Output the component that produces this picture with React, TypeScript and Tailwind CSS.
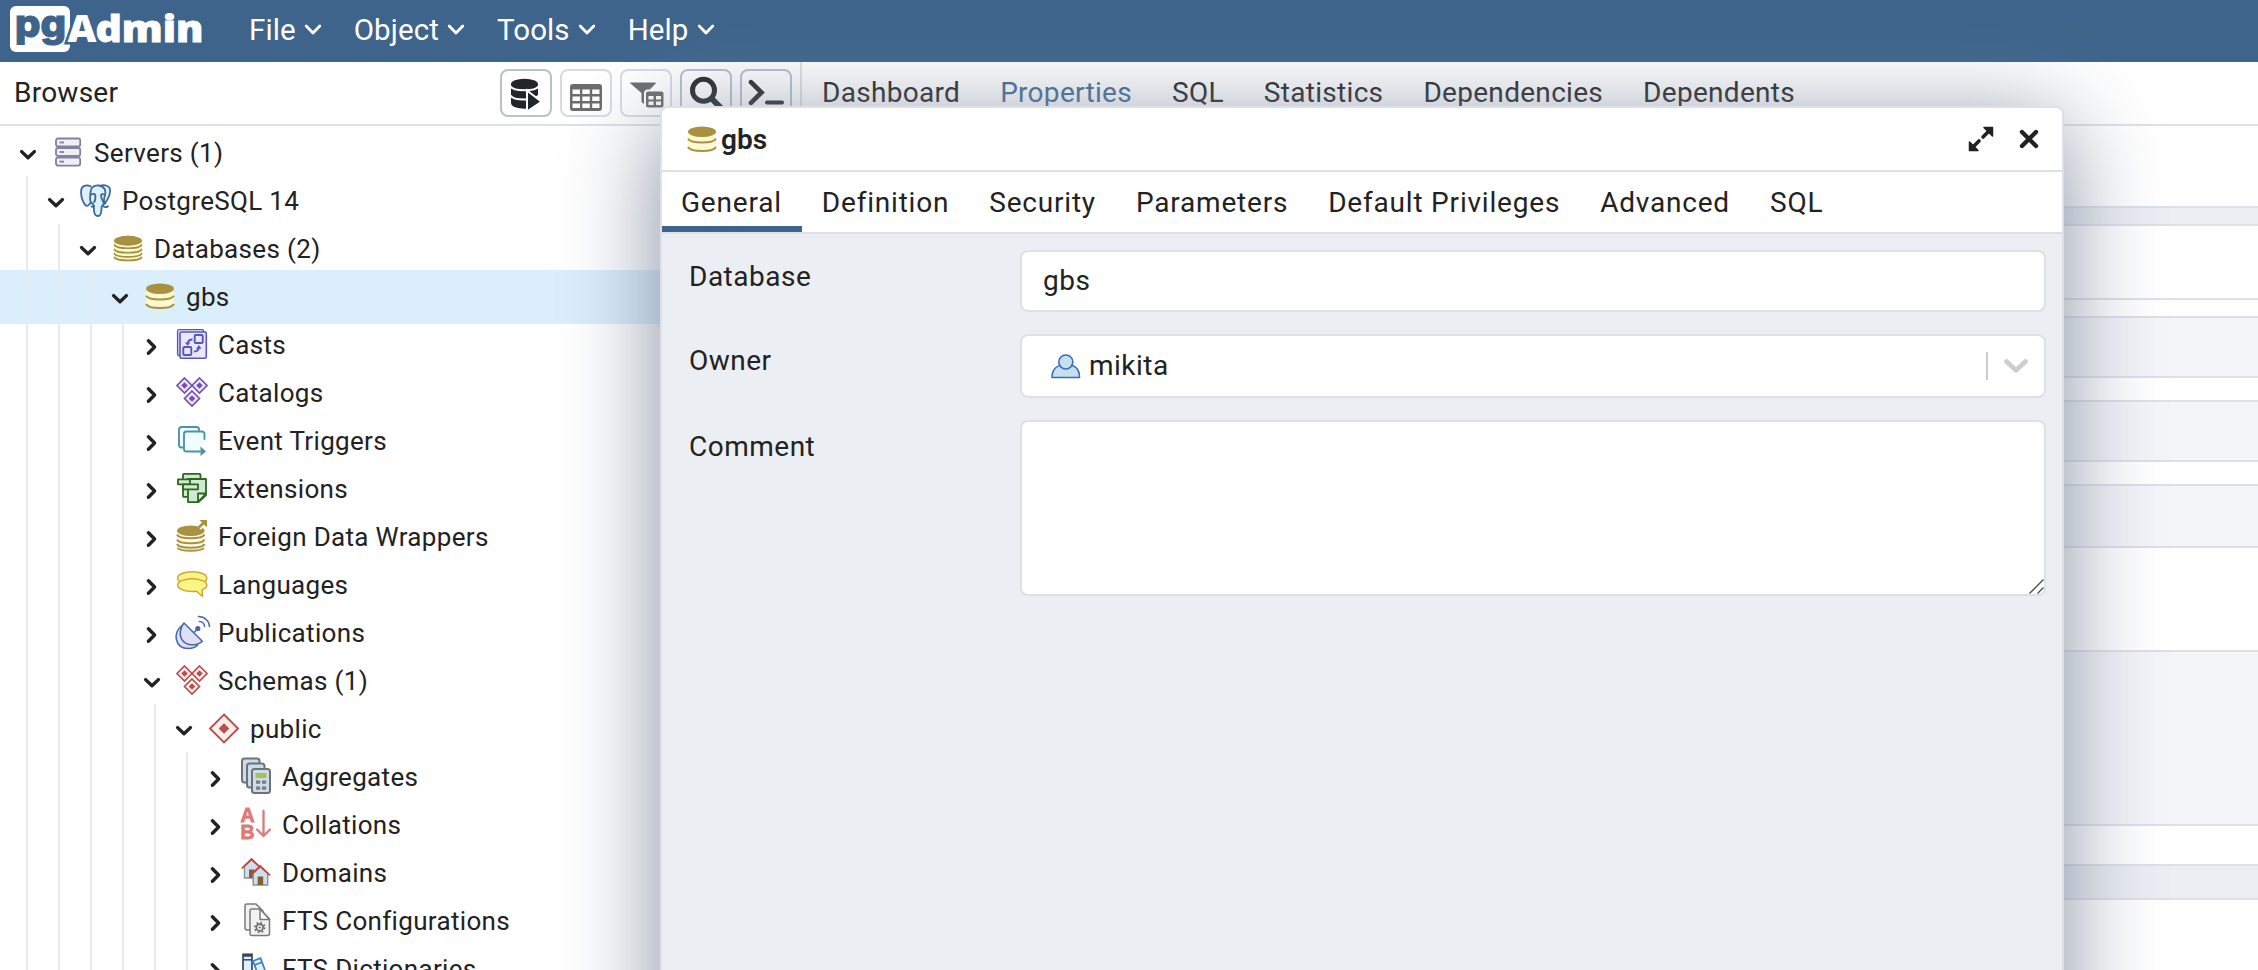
import type { ReactNode } from "react"

const GOLD = "#a8913f"
const CREAM = "#fbf9d2"
const INK = "#222222"

function Chevron({ open }: { open: boolean }) {
  return (
    <svg viewBox="0 0 28 28" className="h-7 w-7 shrink-0" fill="none" stroke={INK} strokeWidth="3.4" strokeLinecap="round" strokeLinejoin="round">
      {open ? <path d="M7.6 12.6 14 18.8l6.400-6.200" /> : <path d="M10.400 9.800 16.600 16l-6.200 6.200" />}
    </svg>
  )
}

function Svg({ children, className = "h-8 w-8" }: { children: ReactNode; className?: string }) {
  return (
    <svg viewBox="0 0 32 32" className={`${className} shrink-0 overflow-visible`} fill="none">
      {children}
    </svg>
  )
}

const ServersIcon = () => (
  <Svg>
    {[1.5, 11, 20.6].map((y) => (
      <g key={y} stroke="#8480a0" strokeWidth="1.8">
        <rect x="4" y={y} width="24.2" height="8" rx="2" fill="#efeff3" />
        <path d={`M7.5 ${y + 4}h4.5`} />
      </g>
    ))}
  </Svg>
)

const ElephantIcon = () => (
  <Svg>
    <g fill="#def0fb" stroke="#3d6a97" strokeWidth="1.8" strokeLinejoin="round" strokeLinecap="round">
      <path d="M10.5 1.2C6 -.6 1.8.8 1.2 5c-.5 4 .8 9.500 2.700 13 1.500 2.800 3.300 4 5.300 1.500l3-3.500" />
      <path d="M20 1c3-1.500 8-1 9.800 2.200C31 7 28 14 25 18.500l-3 .5" />
      <path d="M12.200 2.200C16 -.5 22-.2 24.600 4c1.600 3 .6 6-.2 8.200-.8 2.300-.4 4 0 6.300-1.300 1.300-2.400 1.500-2.800 3.500-.3 3 .4 8.600-3.300 9-3.500.2-4.100-2.500-4.300-5.500-.1-2.500.2-4.700-1.200-6.300C10 18 9.800 14.500 10.200 10.500c.2-3.300.5-6.300 2-8.300z" />
      <path d="M11.300 9.500c1.500-1 3.700-.8 4 .6.300 2.500.6 4.800-1.300 7.200" fill="none" />
      <path d="M24.300 9.500c-1.800-.8-3.300-.3-3.300 1 0 3 1.800 5.500 3 8.200M11.500 21.500c1 .6 2 .3 2.600-.8M22.800 20.800c1.500 1.400 3.700 1.600 5.200.4" fill="none" />
    </g>
  </Svg>
)

const DatabasesIcon = () => (
  <Svg>
    <path d="M2 8v15c0 7 28 7 28 0V8z" fill={CREAM} />
    <g stroke={GOLD} strokeWidth="1.700">
      <path d="M2 11.500c2.500 5 25.500 5 28 0M2 16c2.500 5 25.500 5 28 0M2 20.200c2.500 5 25.500 5 28 0M2 24c2.500 4.600 25.500 4.600 28 0" />
    </g>
    <ellipse cx="16" cy="7.700" rx="14" ry="5" fill={GOLD} />
  </Svg>
)

const DatabaseIcon = ({ className }: { className?: string }) => (
  <Svg className={className}>
    <path d="M2 8v15c0 6.500 28 6.500 28 0V8z" fill={CREAM} />
    <path d="M2 14.800c3 5 25 5 28 0M2 23c3 5.400 25 5.400 28 0" stroke={GOLD} strokeWidth="2" />
    <ellipse cx="16" cy="7.700" rx="14" ry="5.200" fill={GOLD} />
  </Svg>
)

const CastsIcon = () => (
  <Svg>
    <g stroke="#5a55bb" fill="#e8e8fa">
      <rect x="1.600" y=".6" width="26" height="26" rx="1.500" strokeWidth="1.400" />
      <rect x="4" y="3" width="26.300" height="26.300" rx="1.500" strokeWidth="1.600" />
      <g strokeWidth="1.900">
        <rect x="18.700" y="6" width="8" height="8" rx="1" />
        <rect x="7.300" y="18" width="8" height="8" rx="1" />
        <path d="M16.500 10.500c-3 0-4.500 1.200-4.800 4M18 22.500c3 0 4.500-1.200 4.800-4" fill="none" />
      </g>
      <path d="M8.800 13.500h5.600l-2.800 3.300zM20 19.800h5.600L22.800 16z" fill="#5a55bb" stroke="none" />
    </g>
  </Svg>
)

function Diamonds({ line, fill }: { line: string; fill: string }) {
  const spots: [number, number][] = [[8.5, 8.5], [23.5, 8.5], [16, 21.500]]
  return (
    <Svg>
      {spots.map(([x, y]) => (
        <g key={`${x}-${y}`} transform={`translate(${x} ${y})`}>
          <path d="M0-7.500 7.500 0 0 7.500-7.500 0z" fill={fill} stroke={line} strokeWidth="1.700" />
          <path d="M0-3.300 3.300 0 0 3.300-3.300 0z" fill={line} />
        </g>
      ))}
    </Svg>
  )
}

const PublicIcon = () => (
  <Svg>
    <path d="M16 1.500 30 15.500 16 29.500 2 15.500z" fill="#fdeeee" stroke="#b94e4b" strokeWidth="1.900" />
    <path d="M16 10.200l5.300 5.300-5.300 5.300-5.300-5.300z" fill="#b94e4b" />
  </Svg>
)

const EventTriggersIcon = () => (
  <Svg>
    <g stroke="#4c93a6" strokeWidth="1.900" fill="#effdff" strokeLinecap="round">
      <path d="M6.500 22.500H5.500A2.500 2.500 0 0 1 3 20V4.500A2.500 2.500 0 0 1 5.500 2h15A2.500 2.500 0 0 1 23 4.500v1" />
      <path d="M28.500 14V9a2.500 2.500 0 0 0-2.500-2.500H10.500A2.500 2.500 0 0 0 8 9v15a2.500 2.500 0 0 0 2.500 2.500H24" />
    </g>
    <path d="M24.500 21.500 30 26.500l-5.500 4.500z" fill="#4c93a6" />
  </Svg>
)

const ExtensionsIcon = () => (
  <Svg>
    <g stroke="#2f6421" strokeWidth="1.800" fill="#cdebcf" strokeLinejoin="round">
      <rect x="7" y=".900" width="17.500" height="23" rx="1" />
      <path d="M12 6h18v16l-7.500 7.200H12z" />
      <path d="M22 29v-8.500h8z" fill="#eafaea" />
      <rect x="2" y="6.300" width="12" height="5" />
      <rect x="7" y="11.300" width="15" height="5" />
    </g>
  </Svg>
)

const ForeignIcon = () => (
  <Svg>
    <path d="M1 10v15c0 6 27.500 6 27.500 0V10z" fill="#fcfbe4" />
    <g stroke={GOLD} strokeWidth="2">
      <path d="M1 13.500c2.500 5 25 5 27.500 0M1 18.500c2.500 5 25 5 27.500 0M1 23c2.500 5 25 5 27.500 0M1.500 27c2.500 3.600 24 3.600 26.500 0" />
    </g>
    <ellipse cx="14.800" cy="9.700" rx="13.800" ry="5.200" fill={GOLD} />
    <path d="M23 7 29 1.500" stroke="#fff" strokeWidth="5" />
    <path d="M22.500 6.800 28 1.500" stroke={GOLD} strokeWidth="2.600" />
    <path d="M23.500-1H31v7.500z" fill={GOLD} />
  </Svg>
)

const LanguagesIcon = () => (
  <Svg>
    <g stroke="#cda93a" strokeWidth="1.500" fill="#fbf584" strokeLinejoin="round">
      <ellipse cx="16.200" cy="9" rx="14.600" ry="6.300" />
      <path d="M16.200 9.800c8 0 14.600 2.800 14.600 6.300 0 2-1.600 3.700-4.800 4.800l.6 6.600-6-5.200c-9.500.9-19-1.500-19-6.200 0-3.500 6.600-6.300 14.600-6.300z" />
    </g>
  </Svg>
)

const PublicationsIcon = () => (
  <Svg>
    <g stroke="#4a63ae" strokeWidth="1.500" strokeLinejoin="round" strokeLinecap="round">
      <path d="M5.500 9C-3 15-2 31.500 12.500 31.500c3.500 0 7-1.200 9-3.200" fill="#dde1f1" />
      <path d="M8 6 26.300 24.300c-6 5-15.500 4.500-19.500-.5C3 19 3.500 11 8 6z" fill="#dde1f1" />
      <path d="M18.500 15l3-3M23.500 4.500c3 .2 5 2.500 5 5M22.500-.5c6 0 11 4.500 11 10" fill="none" />
    </g>
    <circle cx="21.800" cy="11.500" r="2.600" fill="#4a63ae" />
  </Svg>
)

const AggregatesIcon = () => (
  <Svg>
    <g stroke="#6f7173" strokeWidth="2" fill="#cbdcec">
      <rect x="2" y="-2.500" width="17.500" height="24" rx="2.500" />
      <rect x="7" y="2.500" width="17.500" height="24" rx="2.500" />
      <rect x="12" y="8" width="18" height="24" rx="2.500" />
    </g>
    <rect x="15.500" y="12" width="11" height="5" fill="#a5c24c" />
    <path d="M16 19.500h4.200v3.200H16zM22 19.500h4.200v3.200H22zM16 25.500h4.200v3.200H16zM22 25.500h4.200v3.200H22z" fill="#7b7d80" />
  </Svg>
)

const CollationsIcon = () => (
  <Svg>
    <g fill="#de7a77" fontFamily="Liberation Sans" fontWeight="700" fontSize="19.500" stroke="#de7a77" strokeWidth=".8">
      <text x=".6" y="12.500">A</text>
      <text x=".6" y="29.800">B</text>
    </g>
    <path d="M23.500 2v24.500M17 20.500l6.500 6.500 6.500-6.500" stroke="#de7a77" strokeWidth="2.300" strokeLinecap="round" strokeLinejoin="round" />
  </Svg>
)

const DomainsIcon = () => (
  <Svg>
    {([[0, 0], [8.700, 7]] as [number, number][]).map(([x, y]) => (
      <g key={x} transform={`translate(${x} ${y})`}>
        <path d="M4.500 9.500 11.500 3l7.500 6.500V21H4.500z" fill="#cfdff0" stroke="#8a8f94" strokeWidth="1.400" />
        <path d="M9 12.500h5.500V21H9z" fill="#80602c" />
        <path d="M1.700 11.500 11.500 2l10 9.500" stroke="#c2413b" strokeWidth="1.700" />
      </g>
    ))}
  </Svg>
)

const FtsConfigIcon = () => (
  <Svg>
    <g stroke="#7a7a7a" strokeWidth="1.500" fill="#f2f2f2" strokeLinejoin="round">
      <path d="M5 1a2 2 0 0 1 2-2h9l7 7v17a2 2 0 0 1-2 2H7a2 2 0 0 1-2-2z" />
      <path d="M10 6a2 2 0 0 1 2-2h8l9.500 10v14.500a2 2 0 0 1-2 2H12a2 2 0 0 1-2-2z" />
      <path d="M20 4v10.500h9.500z" fill="#fff" />
    </g>
    <circle cx="19.700" cy="22.500" r="3.400" stroke="#6c6c6c" strokeWidth="1.700" />
    <circle cx="19.700" cy="22.500" r="4.900" stroke="#6c6c6c" strokeWidth="1.700" strokeDasharray="1.700 2.150" />
    <circle cx="19.700" cy="22.500" r="1.100" fill="#6c6c6c" />
  </Svg>
)

const FtsDictIcon = () => (
  <Svg>
    <rect x="3" y="1.300" width="9" height="30" fill="#def1fb" stroke="#34495e" strokeWidth="1.700" />
    <path d="M3 6.800h9" stroke="#34495e" strokeWidth="1.500" />
    <path d="M3 2.500h9" stroke="#34495e" strokeWidth="2.500" />
    <path d="M13 8l7.500-2.800 9 24-7.500 2.800z" fill="#def1fb" stroke="#3e82b8" strokeWidth="1.700" />
    <path d="M14.500 12l7.500-2.800" stroke="#3e82b8" strokeWidth="1.500" />
  </Svg>
)

type Node = { level: number; label: string; icon: ReactNode; open?: boolean; selected?: boolean }

const tree: Node[] = [
  { level: 0, label: "Servers (1)", icon: <ServersIcon />, open: true },
  { level: 1, label: "PostgreSQL 14", icon: <ElephantIcon />, open: true },
  { level: 2, label: "Databases (2)", icon: <DatabasesIcon />, open: true },
  { level: 3, label: "gbs", icon: <DatabaseIcon />, open: true, selected: true },
  { level: 4, label: "Casts", icon: <CastsIcon /> },
  { level: 4, label: "Catalogs", icon: <Diamonds line="#7350b8" fill="#efe8fb" /> },
  { level: 4, label: "Event Triggers", icon: <EventTriggersIcon /> },
  { level: 4, label: "Extensions", icon: <ExtensionsIcon /> },
  { level: 4, label: "Foreign Data Wrappers", icon: <ForeignIcon /> },
  { level: 4, label: "Languages", icon: <LanguagesIcon /> },
  { level: 4, label: "Publications", icon: <PublicationsIcon /> },
  { level: 4, label: "Schemas (1)", icon: <Diamonds line="#b94e4b" fill="#fdeeee" />, open: true },
  { level: 5, label: "public", icon: <PublicIcon />, open: true },
  { level: 6, label: "Aggregates", icon: <AggregatesIcon /> },
  { level: 6, label: "Collations", icon: <CollationsIcon /> },
  { level: 6, label: "Domains", icon: <DomainsIcon /> },
  { level: 6, label: "FTS Configurations", icon: <FtsConfigIcon /> },
  { level: 6, label: "FTS Dictionaries", icon: <FtsDictIcon /> },
]

function TreeRow({ node }: { node: Node }) {
  return (
    <div
      className={
        node.selected
          ? "-mt-[3px] -mb-[3px] flex h-[54px] shrink-0 items-center bg-[#daeefc] py-[3px] pl-[26px]"
          : "flex h-12 shrink-0 items-center " + (node.level === 0 ? "pl-[14px]" : "pl-[26px]")
      }
    >
      {Array.from({ length: node.level }, (_, i) => (
        <div
          key={i}
          className={
            "shrink-0 self-stretch border-l-2 border-[#e8ebf2] " + (i === node.level - 1 ? "w-4" : "w-8")
          }
        />
      ))}
      <Chevron open={!!node.open} />
      <div className="ml-[10px] flex shrink-0">{node.icon}</div>
      <span className="ml-[10px] whitespace-nowrap text-[26px] leading-[48px] tracking-[0.33px]">{node.label}</span>
    </div>
  )
}

function ToolButton({ children, active }: { children: ReactNode; active?: boolean }) {
  return (
    <button
      className={
        "h-12 w-[52px] shrink-0 rounded-lg border-2 bg-white " + (active ? "border-[#b9bfcf]" : "border-[#d8dbe4]")
      }
    >
      <svg viewBox="0 0 48 44" className="h-11 w-12" fill="none">
        {children}
      </svg>
    </button>
  )
}

const Toolbar = () => (
  <div className="flex gap-2">
    <ToolButton active>
      <path d="M9 13v19c0 7.500 27 7.500 27 0V13z" fill="#222529" />
      <ellipse cx="22.500" cy="13" rx="13.500" ry="5.200" fill="#222529" />
      <path d="M8.500 15.200c3 5.400 25 5.400 28 0M8.500 24.500c3 5.400 25 5.400 28 0" stroke="#fff" strokeWidth="2" />
      <path d="M25 19.500v21l14.500-9.700z" fill="#222529" stroke="#fff" strokeWidth="2" />
    </ToolButton>
    <ToolButton>
      <rect x="8" y="13" width="32" height="27" rx="3" fill="#6c6c6c" />
      <path
        d="M10.500 18.500h7.500v4.500h-7.500zM20.300 18.500h7.500v4.500h-7.500zM30.200 18.500h7.300v4.500h-7.300zM10.500 25.500h7.500v4.500h-7.500zM20.300 25.500h7.500v4.500h-7.500zM30.200 25.500h7.300v4.500h-7.300zM10.500 32.500h7.500V37h-7.500zM20.300 32.500h7.500V37h-7.500zM30.200 32.500h7.300V37h-7.300z"
        fill="#fff"
      />
    </ToolButton>
    <ToolButton>
      <path d="M8.500 12h25L24 22v12l-4-3v-9z" fill="#6c6c6c" stroke="#6c6c6c" strokeLinejoin="round" />
      <rect x="23" y="19.500" width="19.500" height="18" rx="3" fill="#6c6c6c" stroke="#fff" strokeWidth="2" />
      <path d="M26.500 25h5v3.500h-5zM34 25h5v3.500h-5zM26.500 30.500h5V34h-5zM34 30.500h5V34h-5z" fill="#fff" />
    </ToolButton>
    <ToolButton active>
      <circle cx="21.500" cy="19.200" r="11" stroke="#222529" strokeWidth="5" />
      <path d="M29.500 27.500 40 38" stroke="#222529" strokeWidth="6" />
    </ToolButton>
    <ToolButton active>
      <path d="M9 11.200 19.500 21.500 9 31.800" stroke="#222529" strokeWidth="4.600" strokeLinecap="round" />
      <path d="M25 31.500h15" stroke="#222529" strokeWidth="4" strokeLinecap="round" />
    </ToolButton>
  </div>
)

function Logo() {
  return (
    <svg viewBox="0 0 202 62" className="h-[62px] w-[202px]" fontWeight="800">
      <rect x="10" y="6" width="60" height="46" rx="6" fill="#fff" />
      <text x="15" y="37" fontFamily="Inter" fontSize="38" fill="#3e648b" stroke="#3e648b" strokeWidth="1.200" textLength="51" lengthAdjust="spacingAndGlyphs">
        pg
      </text>
      <text x="67.500" y="41.500" fontFamily="Open Sans" fontSize="37.500" fill="#fff" stroke="#3e648b" strokeWidth="5" paintOrder="stroke" textLength="29" lengthAdjust="spacingAndGlyphs">
        A
      </text>
      <text x="95.500" y="41.500" fontFamily="Open Sans" fontSize="37.500" fill="#fff" stroke="#fff" strokeWidth=".8" textLength="108" lengthAdjust="spacingAndGlyphs">
        dmin
      </text>
    </svg>
  )
}

function Nav() {
  return (
    <header className="flex h-[62px] shrink-0 items-center bg-[#3e648b] text-white">
      <Logo />
      <nav className="ml-[47px] flex gap-[31px] pb-px text-[29.500px] leading-none tracking-[0.1px]">
        {["File", "Object", "Tools", "Help"].map((m) => (
          <div key={m} className="flex items-center">
            <span>{m}</span>
            <svg viewBox="0 0 20 20" className="ml-[7px] h-5 w-5" fill="none" stroke="#fff" strokeWidth="2.800" strokeLinecap="round" strokeLinejoin="round">
              <path d="M3.200 5 10 12l6.800-7" />
            </svg>
          </div>
        ))}
      </nav>
    </header>
  )
}

function PropertiesPane() {
  return (
    <section className="flex min-w-0 flex-1 flex-col bg-white">
      <div className="flex h-16 shrink-0 items-center border-b-2 border-[#dde0e6] pl-5 text-[28px] tracking-[0.3px]">
        {["Dashboard", "Properties", "SQL", "Statistics", "Dependencies", "Dependents"].map((t) => (
          <span key={t} className={"mr-10 " + (t === "Properties" ? "text-[#3e6a94]" : "")}>
            {t}
          </span>
        ))}
      </div>
      <div className="h-20 shrink-0" />
      <div className="h-5 shrink-0 border-y-2 border-[#dde0e6] bg-[#ebeef3]" />
      <div className="h-[72px] shrink-0" />
      <div className="h-[2px] shrink-0 bg-[#dde0e6]" />
      <div className="h-4 shrink-0" />
      <div className="h-[62px] shrink-0 border-y-2 border-[#dde0e6] bg-[#f3f5f9]" />
      <div className="h-[22px] shrink-0" />
      <div className="h-[62px] shrink-0 border-y-2 border-[#dde0e6] bg-[#f3f5f9]" />
      <div className="h-[22px] shrink-0" />
      <div className="h-16 shrink-0 border-y-2 border-[#dde0e6] bg-[#f3f5f9]" />
      <div className="h-[102px] shrink-0" />
      <div className="h-[176px] shrink-0 border-y-2 border-[#dde0e6] bg-[#f3f5f9]" />
      <div className="h-[38px] shrink-0" />
      <div className="h-9 shrink-0 border-y-2 border-[#dde0e6] bg-[#ebeef3]" />
    </section>
  )
}

function DatabaseDialog() {
  const tabs = ["General", "Definition", "Security", "Parameters", "Default Privileges", "Advanced", "SQL"]
  return (
    <div className="absolute top-[106px] left-[660px] flex h-[1000px] w-[1404px] flex-col overflow-hidden rounded-lg border-2 border-[#dde0e6] bg-[#ebeef3] shadow-[0_16px_96px_#848ea0]">
      <div className="flex h-16 shrink-0 items-center border-b-2 border-[#dde0e6] bg-white pr-[23px] pl-6">
        <div className="flex pt-[2px]">
          <DatabaseIcon />
        </div>
        <span className="ml-[3px] flex-1 pt-px text-[28px] font-semibold">gbs</span>
        <svg viewBox="0 0 26 26" className="h-[26px] w-[26px]" fill={INK} stroke={INK}>
          <path d="M16 1.500h8.500V10zM1.500 16v8.500H10z" strokeWidth="1.500" strokeLinejoin="round" />
          <path d="m15 11 6-6M11 15l-6 6" strokeWidth="3.600" strokeLinecap="round" />
        </svg>
        <svg viewBox="0 0 20 20" className="ml-[25px] h-5 w-5" stroke={INK} strokeWidth="4.400" strokeLinecap="round">
          <path d="m3 3 14 14M17 3 3 17" />
        </svg>
      </div>
      <div className="flex h-[62px] shrink-0 border-b-2 border-[#dde0e6] bg-white text-[28px] tracking-[0.8px]">
        {tabs.map((t, i) => (
          <div
            key={t}
            className={
              "flex shrink-0 items-center border-b-[6px] pt-[7px] whitespace-nowrap " +
              (i === 0 ? "border-[#3e648b] pr-5 pl-[19px]" : "border-transparent px-5")
            }
          >
            {t}
          </div>
        ))}
      </div>
      <div className="grid grid-cols-[331px_1026px] gap-y-[22px] pt-4 pl-[27px] text-[28px] leading-[42px] tracking-[0.5px]">
        <label className="pt-[6px]">Database</label>
        <div className="flex h-[62px] items-center rounded-lg border-2 border-[#dde0e6] bg-white pl-[21px]">gbs</div>
        <label className="pt-[6px]">Owner</label>
        <div className="flex h-16 items-center rounded-lg border-2 border-[#dde0e6] bg-white pl-[27px]">
          <svg viewBox="0 0 32 32" className="h-8 w-8" fill="#c5e1ef" stroke="#3a6bc0" strokeWidth="1.600" strokeLinejoin="round">
            <path d="M3 27.500c0-7.500 4.500-13 14-13s13.500 5.500 13.500 13z" />
            <circle cx="16.800" cy="12" r="7" />
          </svg>
          <span className="ml-[8px] flex-1">mikita</span>
          <div className="h-7 w-[2px] bg-[#cccccc]" />
          <svg viewBox="0 0 24 16" className="mr-4 ml-4 h-4 w-6" fill="none" stroke="#cccccc" strokeWidth="4.600" strokeLinecap="round" strokeLinejoin="round">
            <path d="m2.500 3.500 9.500 8.700 9.500-8.700" />
          </svg>
        </div>
        <label className="pt-[6px]">Comment</label>
        <div className="flex h-44 items-end justify-end rounded-lg border-2 border-[#dde0e6] bg-white">
          <svg viewBox="0 0 16 16" className="h-4 w-4" stroke="#4a4a4a" strokeWidth="1.300">
            <path d="M1.500 15.500 15.500 1.500M9.500 15.500l6-6" />
          </svg>
        </div>
      </div>
    </div>
  )
}

export default function App() {
  return (
    <div className="relative flex h-[970px] w-[2258px] flex-col overflow-hidden bg-white font-[Roboto,sans-serif] text-[#222222]">
      <Nav />
      <main className="flex min-h-0 flex-1">
        <aside className="flex w-[802px] shrink-0 flex-col overflow-hidden border-r-2 border-[#dde0e6]">
          <div className="flex h-16 shrink-0 items-center justify-between border-b-2 border-[#dde0e6] pr-2 pl-[14px]">
            <span className="text-[28px] tracking-[0.24px]">Browser</span>
            <Toolbar />
          </div>
          <div className="flex min-h-0 flex-1 flex-col pt-[3px]">
            {tree.map((n) => (
              <TreeRow key={n.label} node={n} />
            ))}
          </div>
        </aside>
        <PropertiesPane />
      </main>
      <DatabaseDialog />
    </div>
  )
}
